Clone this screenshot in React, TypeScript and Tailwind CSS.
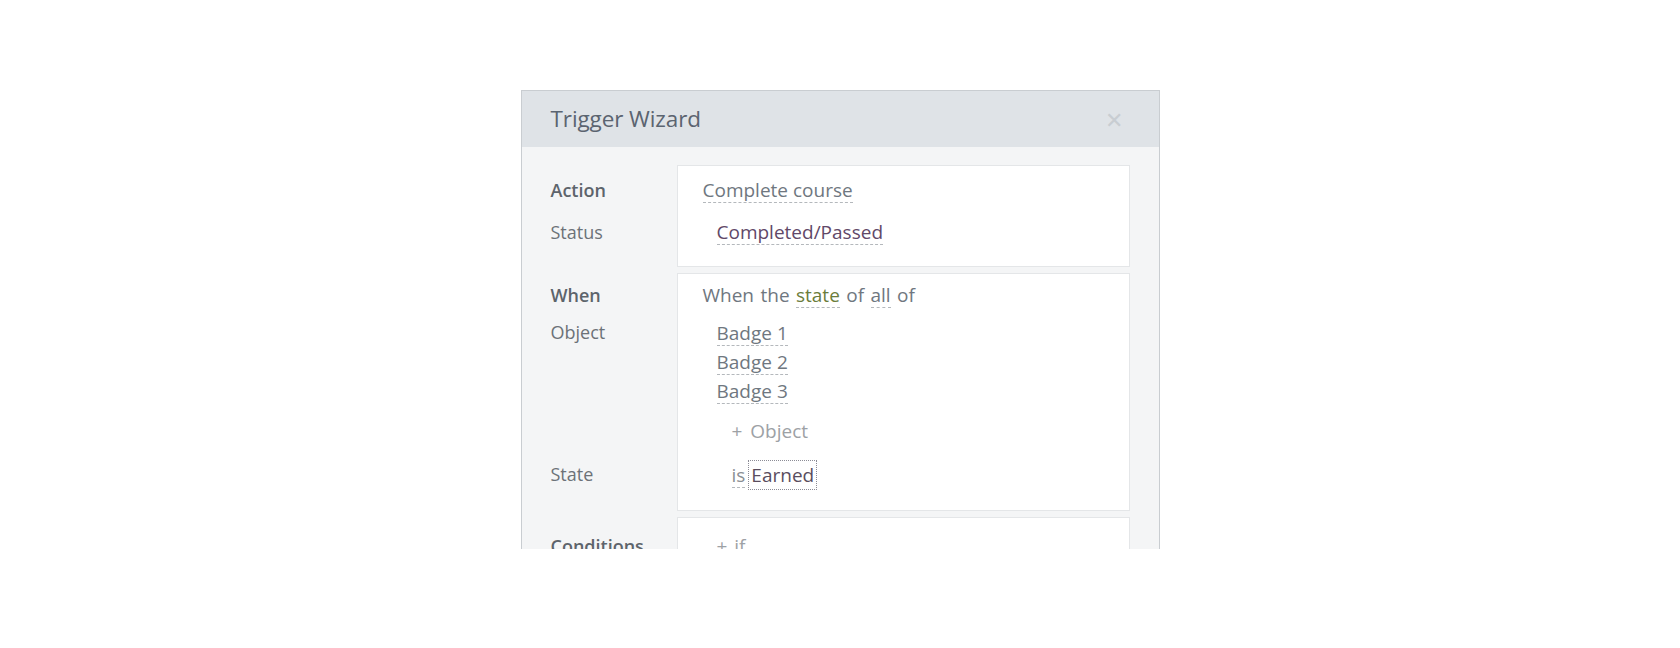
import React from "react";

const font = { fontFamily: '"Open Sans", "Noto Sans", sans-serif' };

function Dashed({ children, className = "" }: { children: React.ReactNode; className?: string }) {
  return (
    <span className={"inline-block leading-[24px] border-b border-dashed border-[#b4b8bc] " + className}>
      {children}
    </span>
  );
}

export default function App() {
  return (
    <div className="w-[1680px] h-[648px] bg-white pt-[90px]" style={font}>
      <div className="mx-auto w-[639px] h-[459px] overflow-hidden border border-[#c9cdd1] border-b-0 bg-[#f4f5f6]">
        {/* header */}
        <div className="h-[56px] bg-[#dfe3e7] flex items-center justify-between pl-[29px] pr-[36px]">
          <span className="text-[22.5px] text-[#5b6470] tracking-[-0.1px]">Trigger Wizard</span>
          <span className="text-[22px] text-[#c8cdd2] leading-none">✕</span>
        </div>

        <div className="pt-[18px] flex flex-col gap-[6px] text-[19px]">
          {/* Section 1 */}
          <div className="flex">
            <div className="w-[155px] pl-[29px] pt-[10px] flex flex-col text-[18px] text-[#6c7278]">
              <div className="h-[30px] flex items-center font-semibold text-[#5d646b]">Action</div>
              <div className="h-[30px] mt-[12px] flex items-center">Status</div>
            </div>
            <div className="flex-1 mr-[29px] bg-white border border-[#e4e6e8] pt-[9px] pb-[19px] pl-[25px] flex flex-col">
              <div className="h-[30px] flex items-center">
                <Dashed className="text-[#6f7780]">Complete course</Dashed>
              </div>
              <div className="h-[30px] mt-[12px] flex items-center pl-[14px]">
                <Dashed className="text-[#614868]">Completed/Passed</Dashed>
              </div>
            </div>
          </div>

          {/* Section 2 */}
          <div className="flex">
            <div className="w-[155px] pl-[29px] pt-[7px] flex flex-col text-[18px] text-[#6c7278]">
              <div className="h-[30px] flex items-center font-semibold text-[#5d646b]">When</div>
              <div className="h-[29px] mt-[8px] flex items-center">Object</div>
              <div className="h-[29px]" />
              <div className="h-[29px]" />
              <div className="h-[30px] mt-[10px]" />
              <div className="h-[30px] mt-[14px] flex items-center">State</div>
            </div>
            <div className="flex-1 mr-[29px] bg-white border border-[#e4e6e8] pt-[6px] pb-[20px] pl-[25px] flex flex-col text-[#6f7780]">
              <div className="h-[30px] flex items-center whitespace-pre [word-spacing:1.5px]">
                <span>When the </span>
                <Dashed className="text-[#6b7d3b]">state</Dashed>
                <span> of </span>
                <Dashed>all</Dashed>
                <span> of</span>
              </div>
              <div className="h-[29px] mt-[9px] flex items-center pl-[14px]">
                <Dashed>Badge 1</Dashed>
              </div>
              <div className="h-[29px] flex items-center pl-[14px]">
                <Dashed>Badge 2</Dashed>
              </div>
              <div className="h-[29px] flex items-center pl-[14px]">
                <Dashed>Badge 3</Dashed>
              </div>
              <div className="h-[30px] mt-[10px] flex items-center pl-[29px] text-[#9da1a5] [word-spacing:3px]">+ Object</div>
              <div className="h-[30px] mt-[14px] flex items-center pl-[29px]">
                <span className="leading-[24px] border-b border-dashed border-[#b4b8bc] text-[#8a8f94]">is</span>
                <span className="ml-[3px] h-[30px] flex items-center px-[2px] border border-dotted border-[#8c8c96] text-[#5a4d5e]">
                  Earned
                </span>
              </div>
            </div>
          </div>

          {/* Section 3 */}
          <div className="flex">
            <div className="w-[155px] pl-[29px] pt-[14px] flex flex-col text-[18px] text-[#6c7278]">
              <div className="h-[30px] flex items-center font-semibold text-[#5d646b]">Conditions</div>
            </div>
            <div className="flex-1 mr-[29px] h-[80px] bg-white border border-[#e4e6e8] pt-[13px] pl-[39px] flex flex-col text-[#9da1a5]">
              <div className="h-[30px] flex items-center [word-spacing:2px]">+ if</div>
            </div>
          </div>
        </div>
      </div>
    </div>
  );
}
